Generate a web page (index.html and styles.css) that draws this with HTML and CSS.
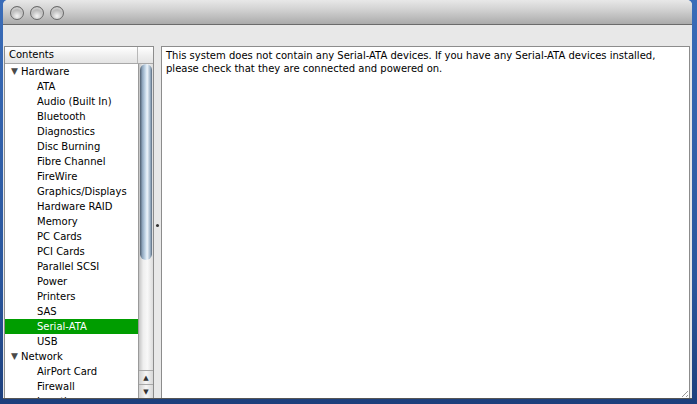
FILE: index.html
```html
<!DOCTYPE html>
<html lang="en">
<head>
    <meta charset="UTF-8">
    <title>System Profiler</title>
    <link rel="stylesheet" href="styles.css">
</head>
<body>
    <div class="window">
        <!-- Title bar -->
        <div class="titlebar">
            <span class="light"></span><span class="light"></span><span class="light"></span>
        </div>

        <div class="content">
            <!-- Outline view -->
            <div class="outline">
                <div class="header">
                    <div class="col-title">Contents</div>
                    <div class="col-corner"></div>
                </div>
                <div class="outline-body">
                    <ul class="rows">
                        <li class="group"><span class="tri">&#9660;</span>Hardware</li>
                        <li>ATA</li>
                        <li>Audio (Built In)</li>
                        <li>Bluetooth</li>
                        <li>Diagnostics</li>
                        <li>Disc Burning</li>
                        <li>Fibre Channel</li>
                        <li>FireWire</li>
                        <li>Graphics/Displays</li>
                        <li>Hardware RAID</li>
                        <li>Memory</li>
                        <li>PC Cards</li>
                        <li>PCI Cards</li>
                        <li>Parallel SCSI</li>
                        <li>Power</li>
                        <li>Printers</li>
                        <li>SAS</li>
                        <li class="selected">Serial-ATA</li>
                        <li>USB</li>
                        <li class="group"><span class="tri">&#9660;</span>Network</li>
                        <li>AirPort Card</li>
                        <li>Firewall</li>
                        <li>Locations</li>
                    </ul>
                    <div class="scroller">
                        <div class="track"><div class="knob"></div></div>
                        <div class="arrow up">&#9650;</div>
                        <div class="arrow down">&#9660;</div>
                    </div>
                </div>
            </div>

            <!-- Split view divider -->
            <div class="splitter"><span class="dimple"></span></div>

            <!-- Detail text -->
            <div class="detail">
                <p>This system does not contain any Serial-ATA devices. If you have any Serial-ATA devices installed, please check that they are connected and powered on.</p>
                <span class="grip"></span>
            </div>
        </div>
    </div>
</body>
</html>
```

FILE: styles.css
```css
* { margin: 0; padding: 0; box-sizing: border-box; }
html, body { height: 100%; overflow: hidden; }
body { background: linear-gradient(#3a6cb8, #2a569c 70%, #1d3f7c); font-family: 'DejaVu Sans', sans-serif; font-size: 10px; color: #000; }

.window { margin: 0 5px 0 3px; height: 399px; background: #e8e8e8; border-radius: 5px 5px 0 0; display: flex; flex-direction: column; overflow: hidden; border-bottom: 1px solid #555; }

.titlebar { height: 25px; flex: none; background: linear-gradient(#e8e8e8, #d2d2d2 40%, #ababab); border-bottom: 1px solid #6b6b6b; display: flex; align-items: center; gap: 6px; padding-left: 7px; padding-top: 2px; }
.light { width: 14px; height: 14px; border-radius: 50%; background: radial-gradient(circle at 50% 75%, #f4f4f4 0, #c4c4c4 45%, #8a8a8a 80%); border: 1px solid #6a6a6a; box-shadow: inset 0 2px 2px rgba(255,255,255,0.6); }

.content { flex: 1; display: flex; padding: 21px 2px 0 1px; min-height: 0; }

.outline { width: 150px; flex: none; background: #fff; border: 1px solid #8c8c8c; border-bottom: none; display: flex; flex-direction: column; }
.header { height: 17px; flex: none; display: flex; background: linear-gradient(#fff, #f0f0f0 50%, #e4e4e4); border-bottom: 1px solid #a8a8a8; }
.col-title { flex: 1; padding: 2px 0 0 4px; border-right: 1px solid #b8b8b8; }
.col-corner { width: 15px; }

.outline-body { flex: 1; display: flex; min-height: 0; overflow: hidden; }
.rows { flex: 1; list-style: none; overflow: hidden; }
.rows li { height: 15px; line-height: 15px; padding-left: 32px; white-space: nowrap; }
.rows li.group { padding-left: 6px; }
.rows .tri { font-size: 9px; color: #4a4a4a; display: inline-block; width: 10px; vertical-align: 1px; }
.rows li.selected { background: #009d00; color: #fff; }

.scroller { width: 15px; flex: none; display: flex; flex-direction: column; border-left: 1px solid #9a9a9a; background: #eee; }
.track { flex: 1; background: linear-gradient(90deg, #c4c4c4, #eeeeee 30%, #f8f8f8 60%, #dcdcdc); padding: 0 1px; }
.knob { height: 196px; border-radius: 7px; background: linear-gradient(90deg, #4d5d6e, #8fa6bd 20%, #c7daea 45%, #eef5fb 60%, #9fb4c8 85%, #56677a); }
.arrow { height: 14px; font-size: 7px; line-height: 14px; text-align: center; color: #333; background: linear-gradient(90deg, #d0d0d0, #f6f6f6 50%, #d8d8d8); border-top: 1px solid #a8a8a8; }

.splitter { width: 7px; flex: none; position: relative; }
.dimple { position: absolute; left: 2px; top: 178px; width: 3px; height: 3px; border-radius: 50%; background: #333; }

.detail { flex: 1; background: #fff; border: 1px solid #8c8c8c; border-bottom: none; padding: 2px 30px 0 4px; position: relative; }
.detail p { line-height: 13px; }
.grip { position: absolute; right: 1px; bottom: 1px; width: 9px; height: 9px; background: repeating-linear-gradient(135deg, transparent 0 2px, #999 2px 3px); clip-path: polygon(100% 0, 100% 100%, 0 100%); }
```
